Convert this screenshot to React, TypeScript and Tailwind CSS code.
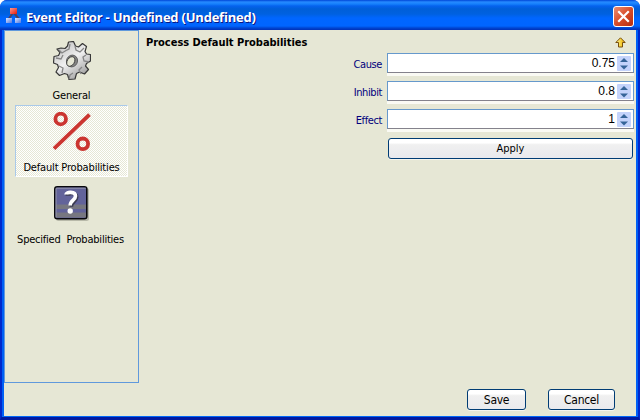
import React from 'react';

const SANS = "font-['DejaVu_Sans_Condensed','DejaVu_Sans',sans-serif]";

function LogoIcon() {
  return (
    <svg width="18" height="18" viewBox="0 0 18 18" className="mt-[7px] ml-[5px] shrink-0">
      <defs>
        <linearGradient id="red" x1="0" y1="0" x2="1" y2="1">
          <stop offset="0" stopColor="#ff9a90" />
          <stop offset="1" stopColor="#e81808" />
        </linearGradient>
        <linearGradient id="blue" x1="0" y1="0" x2="1" y2="1">
          <stop offset="0" stopColor="#dce6ff" />
          <stop offset="1" stopColor="#5078e0" />
        </linearGradient>
      </defs>
      <path d="M8 6L3.5 12M9 6l5 6" stroke="#50405c" strokeWidth="2" fill="none" />
      <rect x="5" y="1" width="7" height="6" fill="url(#red)" />
      <rect x="1" y="11" width="6" height="5" fill="url(#blue)" />
      <rect x="10" y="11" width="6" height="5" fill="url(#blue)" />
    </svg>
  );
}

function GearIcon() {
  return (
    <svg width="38" height="40" viewBox="0 0 38 40">
      <defs>
        <linearGradient id="metal" x1="0.1" y1="0" x2="0.8" y2="1">
          <stop offset="0" stopColor="#b8b8b8" />
          <stop offset="0.5" stopColor="#f0f0f0" />
          <stop offset="1" stopColor="#989898" />
        </linearGradient>
      </defs>
      <path
        d="M14.5 5l1-4 5-.5 2 4.5 3 1 4-3.5 4 3-1.500 5 1.500 2.500 4 .5v6.500l-4 2.500-1 2.500 3 3.500-4 4.500-5-2-3 1.500-1.500 5.500-6 .5-1.500-5-3-1-5 2-3.500-3.500 2.500-4.500-1-3-4-1.500.5-6.500 4.500-1 1.500-3-3-3.500L8 7l4 .5z"
        fill="url(#metal)"
        stroke="#383838"
        strokeWidth="1.2"
        strokeLinejoin="round"
      />
      <path d="M6 9l3 3 4-2.500 3-1.500 1-5M22 5l1 4 4 2 4-4M33 14l-3 2 1 4 5 1M29 26l-3 3 2 4M3 17l5 1 2-4M20 32l-3 2-1 4M6 25l4 2-1 5" fill="none" stroke="#868686" strokeWidth="1.3" />
      <ellipse cx="19" cy="20" rx="5.5" ry="6" transform="rotate(25 19 20)" fill="#858585" stroke="#555" strokeWidth="0.8" />
      <ellipse cx="17.800" cy="20.500" rx="3.600" ry="5.200" transform="rotate(32 17.800 20.500)" fill="#e6e7d5" stroke="#303030" strokeWidth="0.8" />
    </svg>
  );
}

function PercentIcon() {
  return (
    <svg width="38" height="39" viewBox="0 0 38 39">
      <g fill="none" stroke="#cb3530" strokeWidth="3.8">
        <circle cx="7.7" cy="7" r="5.3" />
        <circle cx="29.8" cy="31.8" r="5.3" />
        <path d="M1 36.6L36.5 2.6" />
      </g>
    </svg>
  );
}

function QuestionIcon() {
  return (
    <svg width="35" height="35" viewBox="0 0 35 35">
      <rect x="2" y="2" width="33" height="33" rx="2.5" fill="#b8b9a9" />
      <rect x="0.8" y="0.8" width="32" height="32" rx="2.5" fill="#62639a" stroke="#08080c" strokeWidth="1.6" />
      <path d="M2 18.500h30v4.500H2zM2 26.500h30v5H2z" fill="#777780" />
      <path d="M2 31.500V2.200H32" fill="none" stroke="#9293aa" strokeWidth="1" />
      <path d="M12 8.500c0-3 9.500-3.200 9.500 1.600 0 4.200-5.300 4-5.300 9.500" transform="translate(1.2 1.2)" fill="none" stroke="#3b3b50" strokeWidth="3.6" />
      <path d="M12 8.500c0-3 9.500-3.200 9.500 1.600 0 4.200-5.300 4-5.300 9.500" fill="none" stroke="#fff" strokeWidth="3.6" />
      <circle cx="16.2" cy="25" r="2.7" fill="#fff" />
    </svg>
  );
}

function UpArrow() {
  return (
    <svg width="11" height="11" viewBox="0 0 11 11">
      <defs>
        <linearGradient id="gold" x1="0" x2="1">
          <stop offset="0" stopColor="#fff8a0" />
          <stop offset="0.6" stopColor="#f5cc30" />
          <stop offset="1" stopColor="#d09010" />
        </linearGradient>
      </defs>
      <path d="M5.500.8L10.200 5.500H7.500V10H3.500V5.500H.8z" fill="url(#gold)" stroke="#78500c" strokeWidth="1" />
    </svg>
  );
}

function Field({ label, value }: { label: string; value: string }) {
  return (
    <div className="flex h-[28px]">
      <div className={`${SANS} w-[243px] pt-[4px] text-right text-[11px] leading-[15px] tracking-[-0.4px] text-[#00007c]`}>
        {label}
      </div>
      <div className="ml-[5px] h-[23px] w-[247px] border-b-[3px] border-[#fafaf4]">
        <div className="flex h-[20px] border border-[#6699cc] border-b-[#84828c] bg-white">
          <div className="grow pt-[2px] text-right font-['Liberation_Sans',Arial,sans-serif] text-[12px] leading-[15px] text-black">
            {value}
          </div>
          <svg width="14" height="15" viewBox="0 0 14 15" className="mt-[2px] mr-[2px] ml-[2px]">
            <rect width="14" height="15" rx="1" fill="#c4d3fb" />
            <path d="M3 6L7 2l4 4zM3 9.500l4 4 4-4z" fill="#356498" />
          </svg>
        </div>
      </div>
    </div>
  );
}

function Button({ label, className }: { label: string; className: string }) {
  return (
    <button
      className={`${SANS} ${className} h-[21px] rounded-[3px] border border-[#003c74] bg-linear-to-b from-white from-20% via-[#f0f0f0] via-30% to-[#e9e9ed] text-center leading-[18px] text-black shadow-[0_1px_0_#f5f5ee]`}
    >
      {label}
    </button>
  );
}

export default function App() {
  return (
    <div className="flex h-[420px] w-[640px] flex-col overflow-hidden rounded-t-[7px] bg-[#0033d8]">
      <header className="flex h-[30px] shrink-0 bg-[linear-gradient(180deg,#0046d8_0px,#268aff_2px,#1680fc_4px,#0562ee_6px,#005fd8_9px,#0061e0_14px,#0066ff_18px,#0065ff_26px,#0045d0_28px,#0030b8_30px)]">
        <LogoIcon />
        <h1 className="mt-[9px] ml-[3px] grow font-['Open_Sans','DejaVu_Sans',sans-serif] text-[13px] leading-[16px] font-bold tracking-[-0.22px] whitespace-pre text-white [text-shadow:1px_1px_0_#0a1883]">
          Event Editor - Undefined (Undefined)
        </h1>
        <div className="mt-[6px] mr-[6px] h-[21px] w-[21px] rounded-[3px] border border-white bg-linear-to-br from-[#e98c70] via-[#d84c28] to-[#b62c10]">
          <svg width="19" height="19" viewBox="0 0 19 19">
            <path d="M5 5l9 9M14 5l-9 9" stroke="#fff" strokeWidth="2.2" strokeLinecap="square" />
          </svg>
        </div>
      </header>
      <main className="flex grow flex-col border-x-2 border-b-4 border-x-[#0028cc] border-b-[#0019a0]">
        <div className="flex grow flex-col border-x-2 border-x-[#0060f5] bg-[#e6e7d5] shadow-[0_1px_0_#0068f8]">
          <div className="flex h-[353px]">
            <aside className="flex w-[135px] flex-col items-center border border-[#6099dc]">
              <div className="flex h-[74px] flex-col items-center pt-[10px]">
                <GearIcon />
                <span className={`${SANS} mt-[8px] text-[11px] leading-[14px] tracking-[-0.15px]`}>General</span>
              </div>
              <div className="flex h-[72px] w-[113px] flex-col items-center border border-t-[#a9c9e9] border-r-white border-b-white border-l-[#a9c9e9] bg-[repeating-conic-gradient(#ffffff_0_25%,#e6e7d5_0_50%)] bg-[length:2px_2px] pt-[6px]">
                <PercentIcon />
                <span className={`${SANS} mt-[10px] text-[11px] leading-[14px] tracking-[-0.17px] whitespace-nowrap`}>Default Probabilities</span>
              </div>
              <div className="flex flex-col items-center pt-[9px]">
                <QuestionIcon />
                <span className={`${SANS} mt-[12px] mr-[2px] text-[11px] leading-[14px] tracking-[-0.22px] whitespace-pre`}>Specified  Probabilities</span>
              </div>
            </aside>
            <section className="flex grow flex-col">
              <div className="flex h-[23px] justify-between pr-[11px] pl-[7px]">
                <h2 className={`${SANS} mt-[6px] text-[11px] leading-[14px] font-bold tracking-[-0.02px] text-black`}>Process Default Probabilities</h2>
                <div className="mt-[7px] mr-[-1px]">
                  <UpArrow />
                </div>
              </div>
              <Field label="Cause" value="0.75" />
              <Field label="Inhibit" value="0.8" />
              <Field label="Effect" value="1" />
              <Button label="Apply" className="mt-[1px] ml-[249px] w-[245px] text-[11px]" />
            </section>
          </div>
          <footer className="mt-[6px] flex">
            <Button label="Save" className="ml-[463px] w-[59px] text-[12px] tracking-[-0.3px]" />
            <Button label="Cancel" className="ml-[22px] w-[67px] text-[12px] tracking-[-0.3px]" />
          </footer>
        </div>
      </main>
    </div>
  );
}
